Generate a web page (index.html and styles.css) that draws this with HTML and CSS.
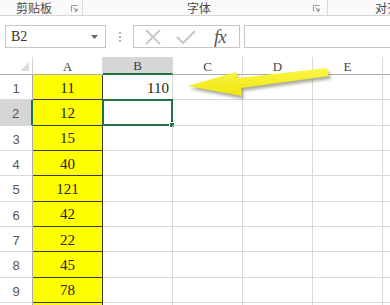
FILE: index.html
```html
<!DOCTYPE html>
<html lang="zh">
<head>
<meta charset="utf-8">
<link rel="stylesheet" href="styles.css">
</head>
<body>
<div class="page">
  <div class="ribbon">
    <div class="grp g1">
      <span class="glabel">剪贴板</span>
      <svg class="launcher" width="7" height="7" viewBox="0 0 7 7"><path d="M0.5 6.5V0.5H6.5" fill="none" stroke="#9a9a9a" stroke-width="1"/><path d="M2.5 2.5L6 6M6 3.5V6H3.5" fill="none" stroke="#7a7a7a" stroke-width="1"/></svg>
    </div>
    <div class="grp g2">
      <span class="glabel">字体</span>
      <svg class="launcher" width="7" height="7" viewBox="0 0 7 7"><path d="M0.5 6.5V0.5H6.5" fill="none" stroke="#9a9a9a" stroke-width="1"/><path d="M2.5 2.5L6 6M6 3.5V6H3.5" fill="none" stroke="#7a7a7a" stroke-width="1"/></svg>
    </div>
    <div class="grp g3">
      <span class="glabel">对齐</span>
    </div>
  </div>

  <div class="fbar">
    <div class="namebox">
      <span class="nametext">B2</span>
      <svg class="dd" width="7" height="4" viewBox="0 0 7 4"><path d="M0 0H7L3.5 4Z" fill="#666"/></svg>
    </div>
    <div class="dots"><i></i><i></i><i></i></div>
    <div class="fbtns">
      <svg class="ic" width="18" height="16" viewBox="0 0 18 16"><path d="M2 1L16 15M16 1L2 15" stroke="#c9c9c9" stroke-width="2" fill="none"/></svg>
      <svg class="ic" width="20" height="16" viewBox="0 0 20 16"><path d="M1 8L7 14L19 2" stroke="#c9c9c9" stroke-width="2.2" fill="none"/></svg>
      <span class="fx">fx</span>
    </div>
    <div class="finput"></div>
  </div>

  <div class="sheet">
    <div class="corner"><span class="tri"></span></div>
    <div class="ch">A</div>
    <div class="ch sel">B</div>
    <div class="ch">C</div>
    <div class="ch">D</div>
    <div class="ch">E</div>
    <div class="ch last"></div>

    <div class="rh">1</div><div class="c y">11</div><div class="c num r1b">110</div><div class="c"></div><div class="c"></div><div class="c"></div><div class="c last"></div>
    <div class="rh sel">2</div><div class="c y">12</div><div class="c active"><span class="handle"></span></div><div class="c"></div><div class="c"></div><div class="c"></div><div class="c last"></div>
    <div class="rh">3</div><div class="c y">15</div><div class="c"></div><div class="c"></div><div class="c"></div><div class="c"></div><div class="c last"></div>
    <div class="rh">4</div><div class="c y">40</div><div class="c"></div><div class="c"></div><div class="c"></div><div class="c"></div><div class="c last"></div>
    <div class="rh">5</div><div class="c y">121</div><div class="c"></div><div class="c"></div><div class="c"></div><div class="c"></div><div class="c last"></div>
    <div class="rh">6</div><div class="c y">42</div><div class="c"></div><div class="c"></div><div class="c"></div><div class="c"></div><div class="c last"></div>
    <div class="rh">7</div><div class="c y">22</div><div class="c"></div><div class="c"></div><div class="c"></div><div class="c"></div><div class="c last"></div>
    <div class="rh">8</div><div class="c y">45</div><div class="c"></div><div class="c"></div><div class="c"></div><div class="c"></div><div class="c last"></div>
    <div class="rh">9</div><div class="c y">78</div><div class="c"></div><div class="c"></div><div class="c"></div><div class="c"></div><div class="c last"></div>
    <div class="rh"></div><div class="c y"></div><div class="c"></div><div class="c"></div><div class="c"></div><div class="c"></div><div class="c last"></div>
  </div>

  <svg class="arrow" width="390" height="305" viewBox="0 0 390 305">
    <defs>
      <filter id="sh" x="-20%" y="-50%" width="140%" height="200%">
        <feGaussianBlur stdDeviation="1.6"/>
      </filter>
      <linearGradient id="yg" x1="0" y1="0" x2="0" y2="1">
        <stop offset="0" stop-color="#fbf64a"/>
        <stop offset="1" stop-color="#efe60a"/>
      </linearGradient>
    </defs>
    <polygon points="190,89 238,75 240,81 329,71 331,79 243,91 244,99" fill="#6b6b50" opacity="0.55" filter="url(#sh)"/>
    <polygon points="188,86 236,72 238,78 327,68 329,76 241,88 242,96" fill="url(#yg)"/>
  </svg>
</div>
</body>
</html>
```

FILE: styles.css
```css
* { box-sizing: border-box; }
html, body { margin: 0; padding: 0; background: #fff; }
.page {
  position: relative;
  width: 390px;
  height: 305px;
  overflow: hidden;
  background: #fff;
}

/* ribbon group labels */
.ribbon {
  display: flex;
  height: 16px;
  border-bottom: 1px solid #d6d6d6;
  background: #fafafa;
  overflow: hidden;
}
.grp {
  display: flex;
  align-items: center;
  height: 15px;
  flex-shrink: 0;
}
.g1 { width: 83px; border-right: 1px solid #d9d9d9; padding-left: 16px; }
.g2 { width: 245px; border-right: 1px solid #d9d9d9; padding-left: 104px; }
.g3 { width: 62px; padding-left: 47px; overflow: hidden; }
.glabel {
  font-family: "Noto Sans CJK SC", "Noto Sans", sans-serif;
  font-size: 12px;
  line-height: 12px;
  color: #4a4a4a;
  white-space: nowrap;
}
.launcher { margin-left: auto; margin-right: 4px; margin-top: 1px; }
.g2 .launcher { margin-right: 7px; }

/* formula bar */
.fbar {
  display: flex;
  align-items: center;
  height: 23px;
  margin-top: 9px;
  padding-left: 5px;
}
.namebox {
  width: 101px;
  height: 23px;
  border: 1px solid #c6c6c6;
  display: flex;
  align-items: center;
  padding-left: 5px;
  padding-right: 7px;
}
.nametext {
  font-family: "Liberation Serif", serif;
  font-size: 14px;
  color: #333;
}
.dd { margin-left: auto; }
.dots {
  width: 27px;
  display: flex;
  flex-direction: column;
  align-items: center;
  gap: 2px;
}
.dots i {
  display: block;
  width: 2px;
  height: 2px;
  background: #b0b0b0;
}
.fbtns {
  width: 107px;
  height: 23px;
  border: 1px solid #c6c6c6;
  display: flex;
  align-items: center;
  padding-left: 10px;
  gap: 14px;
}
.fx {
  font-family: "Liberation Serif", serif;
  font-style: italic;
  font-size: 19px;
  color: #555;
  margin-left: 4px;
  letter-spacing: -1px;
}
.finput {
  flex: 1;
  height: 23px;
  margin-left: 4px;
  border: 1px solid #c6c6c6;
  border-right: none;
}

/* sheet */
.sheet {
  display: grid;
  grid-template-columns: 33px 70px 70px 70px 70px 70px 1fr;
  grid-template-rows: 18px repeat(10, 25.33px);
  margin-top: 9px;
}
.corner {
  position: relative;
  border-right: 1px solid #d4d4d4;
  border-bottom: 1px solid #ababab;
}
.tri {
  position: absolute;
  right: 3px;
  bottom: 3px;
  width: 0;
  height: 0;
  border-left: 9px solid transparent;
  border-bottom: 9px solid #dcdcdc;
}
.ch {
  display: flex;
  align-items: center;
  justify-content: center;
  font-family: "Liberation Serif", serif;
  font-size: 13px;
  color: #444;
  border-right: 1px solid #d8d8d8;
  border-bottom: 1px solid #ababab;
  padding-top: 2px;
}
.ch.sel {
  background: #d6d6d6;
  border-bottom: 2px solid #217346;
  color: #3a3a3a;
}
.rh {
  display: flex;
  align-items: center;
  justify-content: center;
  font-family: "Liberation Sans", sans-serif;
  font-size: 13px;
  color: #555;
  border-right: 1px solid #ababab;
  border-bottom: 1px solid #d8d8d8;
  padding-top: 3px;
}
.rh.sel {
  background: #d6d6d6;
  border-right: 2px solid #217346;
}
.c {
  position: relative;
  border-right: 1px solid #d8d8d8;
  border-bottom: 1px solid #d8d8d8;
  font-family: "Liberation Serif", serif;
  font-size: 15px;
  color: #222;
  display: flex;
  align-items: center;
  justify-content: center;
  padding-top: 2px;
}
.c.last { border-right: none; }
.ch.last { border-right: none; }
.c.y {
  background: #ffff00;
  border-right: 1px solid #3a3a3a;
  border-bottom: 1px solid #3a3a3a;
}
.c.num { justify-content: flex-end; padding-right: 3px; }
.c.r1b { border-bottom: none; }
.c.active {
  border: 2px solid #217346;
  margin-left: -1px;
  margin-top: -1px;
}
.handle {
  position: absolute;
  right: -4px;
  bottom: -4px;
  width: 6px;
  height: 6px;
  background: #217346;
  border: 1px solid #fff;
}

.arrow {
  position: absolute;
  left: 0;
  top: 0;
  pointer-events: none;
}
```
